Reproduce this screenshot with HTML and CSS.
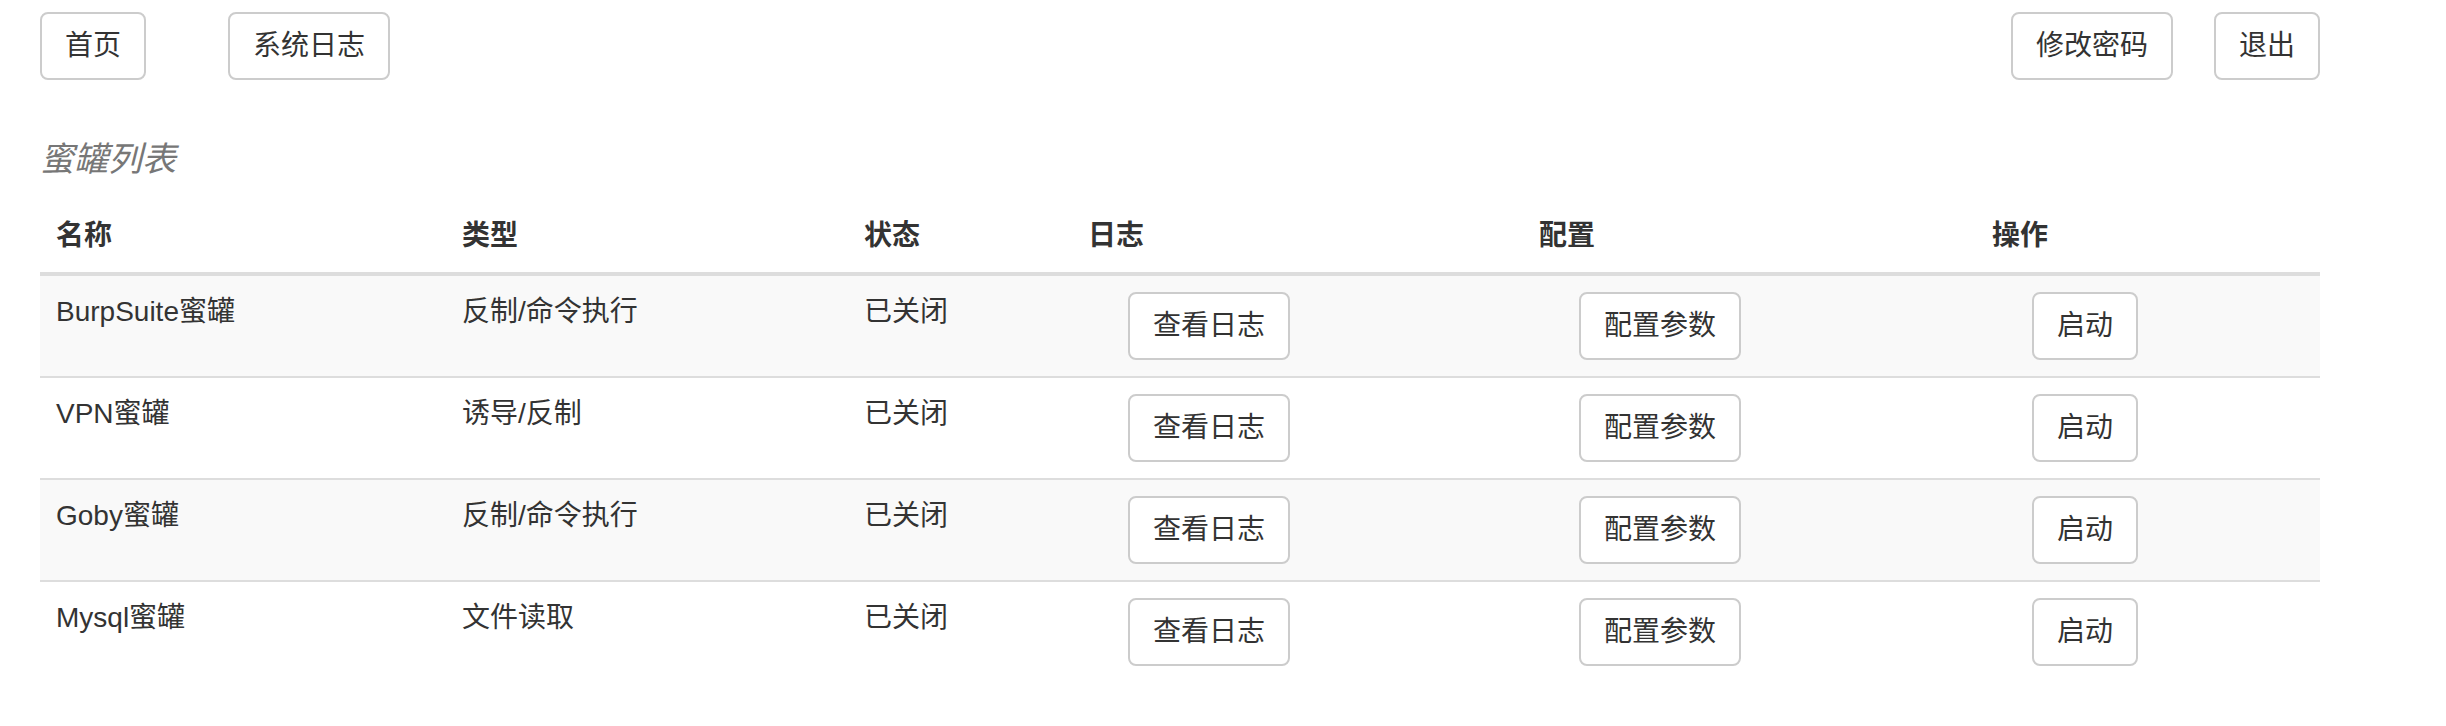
FILE: index.html
```html
<!DOCTYPE html>
<html lang="zh-CN">
<head>
<meta charset="utf-8">
<title>蜜罐列表</title>
<link rel="stylesheet" href="styles.css">
</head>
<body>
<div class="page">
  <nav class="topbar">
    <div class="nav-group nav-left">
      <a class="btn" href="#">首页</a>
      <a class="btn" href="#">系统日志</a>
    </div>
    <div class="nav-group nav-right">
      <a class="btn" href="#">修改密码</a>
      <a class="btn" href="#">退出</a>
    </div>
  </nav>

  <h4 class="section-title">蜜罐列表</h4>

  <table class="table">
    <colgroup>
      <col class="c-name">
      <col class="c-type">
      <col class="c-state">
      <col class="c-log">
      <col class="c-conf">
      <col class="c-op">
    </colgroup>
    <thead>
      <tr>
        <th>名称</th>
        <th>类型</th>
        <th>状态</th>
        <th>日志</th>
        <th>配置</th>
        <th>操作</th>
      </tr>
    </thead>
    <tbody>
      <tr>
        <td>BurpSuite蜜罐</td>
        <td>反制/命令执行</td>
        <td>已关闭</td>
        <td><a class="btn cell-btn" href="#">查看日志</a></td>
        <td><a class="btn cell-btn" href="#">配置参数</a></td>
        <td><a class="btn cell-btn" href="#">启动</a></td>
      </tr>
      <tr>
        <td>VPN蜜罐</td>
        <td>诱导/反制</td>
        <td>已关闭</td>
        <td><a class="btn cell-btn" href="#">查看日志</a></td>
        <td><a class="btn cell-btn" href="#">配置参数</a></td>
        <td><a class="btn cell-btn" href="#">启动</a></td>
      </tr>
      <tr>
        <td>Goby蜜罐</td>
        <td>反制/命令执行</td>
        <td>已关闭</td>
        <td><a class="btn cell-btn" href="#">查看日志</a></td>
        <td><a class="btn cell-btn" href="#">配置参数</a></td>
        <td><a class="btn cell-btn" href="#">启动</a></td>
      </tr>
      <tr>
        <td>Mysql蜜罐</td>
        <td>文件读取</td>
        <td>已关闭</td>
        <td><a class="btn cell-btn" href="#">查看日志</a></td>
        <td><a class="btn cell-btn" href="#">配置参数</a></td>
        <td><a class="btn cell-btn" href="#">启动</a></td>
      </tr>
    </tbody>
  </table>
</div>
</body>
</html>
```

FILE: styles.css
```css
html, body {
  margin: 0;
  padding: 0;
  background: #fff;
}

body {
  font-family: "Liberation Sans", "Noto Sans CJK SC", sans-serif;
  font-size: 28px;
  line-height: 40px;
  color: #333;
}

.page {
  width: 2280px;
  margin-left: 40px;
  padding-top: 12px;
}

.topbar {
  display: flex;
  justify-content: space-between;
  align-items: flex-start;
}

.nav-group {
  display: flex;
}

.nav-left {
  gap: 82px;
}

.nav-right {
  gap: 41px;
}

.btn {
  display: inline-block;
  padding: 12px 23px;
  font-size: 28px;
  line-height: 40px;
  color: #333;
  background: #fff;
  border: 2px solid #ccc;
  border-radius: 8px;
  text-decoration: none;
  white-space: nowrap;
}

.section-title {
  margin: 60px 0 22px;
  font-size: 34px;
  line-height: 38px;
  font-weight: normal;
  font-style: italic;
  color: #777;
}

.table {
  width: 2280px;
  table-layout: fixed;
  border-collapse: collapse;
  border-spacing: 0;
}

.c-name { width: 406px; }
.c-type { width: 402px; }
.c-state { width: 224px; }
.c-log { width: 451px; }
.c-conf { width: 453px; }
.c-op { width: 344px; }

.table th,
.table td {
  padding: 16px;
  text-align: left;
  vertical-align: top;
}

.table th {
  font-weight: bold;
  border-bottom: 4px solid #ddd;
}

.table tbody tr + tr td {
  border-top: 2px solid #ddd;
}

.table tbody tr:nth-child(odd) td {
  background: #f9f9f9;
}

.cell-btn {
  margin-left: 40px;
  vertical-align: top;
}
```
